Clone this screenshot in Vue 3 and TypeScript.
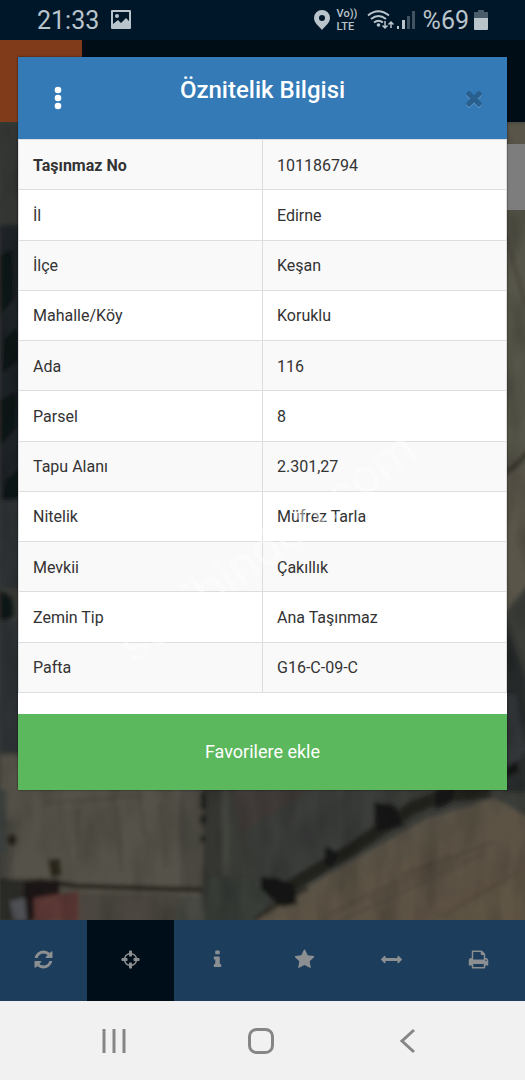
<script setup lang="ts">
interface Attribute {
  label: string
  value: string
}

interface Tool {
  name: string
  path: string
  active?: boolean
}

const attributes: Attribute[] = [
  { label: 'Taşınmaz No', value: '101186794' },
  { label: 'İl', value: 'Edirne' },
  { label: 'İlçe', value: 'Keşan' },
  { label: 'Mahalle/Köy', value: 'Koruklu' },
  { label: 'Ada', value: '116' },
  { label: 'Parsel', value: '8' },
  { label: 'Tapu Alanı', value: '2.301,27' },
  { label: 'Nitelik', value: 'Müfrez Tarla' },
  { label: 'Mevkii', value: 'Çakıllık' },
  { label: 'Zemin Tip', value: 'Ana Taşınmaz' },
  { label: 'Pafta', value: 'G16-C-09-C' },
]

const tools: Tool[] = [
  {
    name: 'Yenile',
    path: 'M1639 1056q0 5-1 7-64 268-268 434.5t-478 166.5q-146 0-282.5-55t-243.5-157l-129 129q-19 19-45 19t-45-19-19-45v-448q0-26 19-45t45-19h448q26 0 45 19t19 45-19 45l-137 137q71 66 161 102t187 36q134 0 250-65t186-179q11-17 53-117 8-23 30-23h192q13 0 22.5 9.5t9.5 22.5zm25-800v448q0 26-19 45t-45 19h-448q-26 0-45-19t-19-45 19-45l138-138q-148-137-349-137-134 0-250 65t-186 179q-11 17-53 117-8 23-30 23h-199q-13 0-22.5-9.5t-9.5-22.5v-7q65-268 270-434.5t480-166.5q146 0 284 55.5t245 156.5l130-129q19-19 45-19t45 19 19 45z',
  },
  {
    name: 'Konum',
    active: true,
    path: 'M1325 1024h-109q-26 0-45-19t-19-45v-128q0-26 19-45t45-19h109q-32-108-112.5-188.5t-188.5-112.5v109q0 26-19 45t-45 19h-128q-26 0-45-19t-19-45v-109q-108 32-188.5 112.5t-112.5 188.5h109q26 0 45 19t19 45v128q0 26-19 45t-45 19h-109q32 108 112.5 188.5t188.5 112.5v-109q0-26 19-45t45-19h128q26 0 45 19t19 45v109q108-32 188.5-112.5t112.5-188.5zm339-192v128q0 26-19 45t-45 19h-143q-37 161-154.5 278.5t-278.5 154.5v143q0 26-19 45t-45 19h-128q-26 0-45-19t-19-45v-143q-161-37-278.5-154.5t-154.5-278.5h-143q-26 0-45-19t-19-45v-128q0-26 19-45t45-19h143q37-161 154.5-278.5t278.5-154.5v-143q0-26 19-45t45-19h128q26 0 45 19t19 45v143q161 37 278.5 154.5t154.5 278.5h143q26 0 45 19t19 45z',
  },
  {
    name: 'Bilgi',
    path: 'M1216 1344v128q0 26-19 45t-45 19h-512q-26 0-45-19t-19-45v-128q0-26 19-45t45-19h64v-384h-64q-26 0-45-19t-19-45v-128q0-26 19-45t45-19h384q26 0 45 19t19 45v576h64q26 0 45 19t19 45zm-128-1152v192q0 26-19 45t-45 19h-256q-26 0-45-19t-19-45v-192q0-26 19-45t45-19h256q26 0 45 19t19 45z',
  },
  {
    name: 'Favoriler',
    path: 'M1728 647q0 22-26 48l-363 354 86 500q1 7 1 20 0 21-10.5 35.5t-30.5 14.5q-19 0-40-12l-449-236-449 236q-22 12-40 12-21 0-31.5-14.5t-10.5-35.5q0-6 2-20l86-500-364-354q-25-27-25-48 0-37 56-46l502-73 225-455q19-41 49-41t49 41l225 455 502 73q56 9 56 46z',
  },
  {
    name: 'Ölçüm',
    path: 'M1792 896q0 26-19 45l-256 256q-19 19-45 19t-45-19-19-45v-128h-1024v128q0 26-19 45t-45 19-45-19l-256-256q-19-19-19-45t19-45l256-256q19-19 45-19t45 19 19 45v128h1024v-128q0-26 19-45t45-19 45 19l256 256q19 19 19 45z',
  },
  {
    name: 'Yazdır',
    path: 'M448 1536h896v-256h-896v256zm0-640h896v-384h-160q-40 0-68-28t-28-68v-160h-640v640zm1152 64q0-26-19-45t-45-19-45 19-19 45 19 45 45 19 45-19 19-45zm128 0v416q0 13-9.5 22.5t-22.5 9.5h-224v160q0 40-28 68t-68 28h-960q-40 0-68-28t-28-68v-160h-224q-13 0-22.5-9.5t-9.5-22.5v-416q0-79 56.5-135.5t135.5-56.5h64v-544q0-40 28-68t68-28h672q40 0 88 20t76 48l152 152q28 28 48 76t20 88v256h64q79 0 135.5 56.5t56.5 135.5z',
  },
]
</script>

<template>
  <div class="screen">
    <header class="status">
      <span class="clock">21:33</span>
      <svg class="picture" width="20" height="20" viewBox="0 0 20 20" aria-hidden="true">
        <path fill-rule="evenodd" d="M1 0h18q1 0 1 1v17q0 1-1 1H1q-1 0-1-1V1q0-1 1-1zM2 2v12l5-4 3 3 5-5 3 3V2z" />
        <circle cx="6" cy="6" r="2" />
      </svg>
      <div class="signals">
        <svg width="16" height="20" viewBox="0 0 16 20" aria-hidden="true">
          <path fill-rule="evenodd" d="M8 0a8 8 0 0 1 8 8c0 5-5 8-8 12C5 16 0 13 0 8a8 8 0 0 1 8-8zm0 5a3 3 0 1 0 0 6 3 3 0 0 0 0-6z" />
        </svg>
        <span class="volte"><span>Vo))</span><span>LTE</span></span>
        <svg class="wifi" width="27" height="20" viewBox="0 0 27 20" aria-hidden="true">
          <g fill="none" stroke="currentColor" stroke-width="2">
            <path d="M1 5.500Q11-3 22 5.500" />
            <path d="M4 9q7.500-6 15 0" />
            <path d="M7 12.500q4.500-3.500 9 0" />
            <path d="M18 11v7M15.500 15.500 18 18l2.500-2.500M24 18v-6M21.500 14.500 24 12l2.500 2.500" stroke-width="1.500" />
          </g>
          <circle cx="11.500" cy="15" r="1.800" />
        </svg>
        <svg class="bars" width="18" height="20" viewBox="0 0 18 20" aria-hidden="true">
          <path d="M0 16h2v3H0zM5 10h3v9H5z" />
          <path opacity=".35" d="M10 6h3v13h-3zM15 1h3v18h-3z" />
        </svg>
        <span class="charge">%69</span>
        <svg width="14" height="20" viewBox="0 0 14 20" aria-hidden="true">
          <path opacity=".4" d="M4 0h6v2h4v6H0V2h4z" />
          <path d="M0 8h14v11q0 1-1 1H1q-1 0-1-1z" />
        </svg>
      </div>
    </header>

    <div class="topbar"><div class="brand"></div></div>

    <main class="map">
      <svg class="terrain" viewBox="0 122 525 798" preserveAspectRatio="xMidYMax slice" aria-hidden="true">
        <defs>
          <filter id="soft" x="-5%" y="-5%" width="110%" height="110%"><feGaussianBlur stdDeviation="2" /></filter>
          <filter id="grain" x="0" y="0" width="100%" height="100%">
            <feTurbulence type="fractalNoise" baseFrequency=".05 .02" numOctaves="2" seed="4" />
            <feColorMatrix values="0 0 0 0 0  0 0 0 0 0  0 0 0 0 0  1.600 0 0 0 -.600" />
          </filter>
          <linearGradient id="plough" x1="0" y1="0" x2="1" y2="1">
            <stop offset="0" stop-color="#544f46" />
            <stop offset="1" stop-color="#615545" />
          </linearGradient>
        </defs>
        <rect y="122" width="525" height="798" fill="#3b3d39" />
        <g filter="url(#soft)">
          <path fill="#303632" d="M0 122h30v110H0z" />
          <path fill="#1f2425" d="M0 225h30v280H0z" />
          <path fill="#111617" d="M0 255l12-6 2 50-14 16zM4 340l14-14v34L2 374zM0 400l16-8v36L0 446zM0 590l12 8 2 18-14 8zM6 480l14-12v28L0 510z" />
          <path fill="#2d3234" d="M0 500h30v88H0zM0 620h30v132H0z" />
          <path fill="#5a5549" d="M490 122h40v460l-24 30h-16z" />
          <path fill="#56544a" d="M490 210h40v260h-40z" />
          <path fill="none" stroke="#3e3c32" stroke-width="2" d="M505 235l21 70" />
          <path fill="none" stroke="#34342b" stroke-width="5" d="M502 474q12-5 26-22" />
          <path fill="#282b2b" d="M505 620l22 62v110h-22z" />
          <path fill="#34393b" d="M505 695h11l10 55-20 30z" />
          <path fill="#171815" d="M505 768l12-8 2 12-14 6z" />
          <path fill="#55534a" d="M0 755h200l4 126-10 44H0z" />
          <path fill="#4b4a42" d="M180 770h25v120h-25zM0 820h14v60H0z" />
          <path fill="#3c4240" d="M0 790h6v64H0z" />
          <path fill="#343633" d="M203 780h25v145h-25z" />
          <path fill="#454640" d="M222 785h8v92h-8z" />
          <path fill="#403b37" d="M230 780h110l-8 54-90 10z" />
          <path fill="#3b3e3b" d="M320 785h75l-60 85-62 18-32-55z" />
          <path fill="#373d39" d="M210 878l60 2-10 45h-55z" />
          <path fill="url(#plough)" d="M250 925l60-40 115-66 70-21 35 20v110z" />
          <path fill="none" stroke="#23211f" stroke-width="13" stroke-linejoin="round" d="M284 890l24-15 44-26 32-22 28-19 30-12 48-5" />
          <path fill="none" stroke="#292723" stroke-width="4" d="M254 920l30-20 24-12" />
          <path fill="#171914" d="M261 877l16 1 18 8 2 18-16 3-20-18zM325 846l14 7-7 15-8-4zM374 802l21 4 8 20-27 5zM435 790l21-4-4 16-16 7z" />
          <path fill="none" stroke="#1c1e19" stroke-width="5" stroke-dasharray="17 6 9 12" d="M203 792v50" />
          <path fill="none" stroke="#25231f" stroke-width="5" d="M0 883l42-2 35 5 125 4" />
          <path fill="#1d1615" d="M22 883l37-4 1 15-24 8-3 20h-9z" />
          <path fill="#2b281a" d="M48 860l12-2 2 17-11 3z" />
          <ellipse cx="12" cy="840" rx="5" ry="6" fill="#25221d" />
          <path fill="#2b2927" d="M0 878l24 2v42H0z" />
          <path fill="#53555a" d="M10 901l15-3 2 22H14z" />
          <path fill="#5b3936" d="M34 898l45-7v31H34z" />
          <path fill="#4b4740" d="M80 893h100l-3 30H82z" />
          <path fill="#474942" d="M180 896h22l4 26h-32z" />
          <g fill="none" stroke="#434139" stroke-width="2" opacity=".7">
            <path d="M78 810v50M118 806l3 66M140 796l4 40M160 802l5 66M45 803l100-8M245 800l8 80M285 825l20-10" />
          </g>
          <g fill="none" stroke="#4b4033" stroke-width="2" opacity=".6">
            <path d="M330 914l120-58M345 919l140-66M400 875l95-33M440 917l80-46M370 900l90-42" />
          </g>
        </g>
        <rect y="122" width="525" height="798" filter="url(#grain)" opacity=".2" />
      </svg>
      <div class="map-control"></div>
    </main>

    <nav class="toolbar" aria-label="Harita araçları">
      <button v-for="tool in tools" :key="tool.name" type="button" :class="{ active: tool.active }" :aria-label="tool.name">
        <svg width="21" height="21" viewBox="0 0 1792 1792" aria-hidden="true"><path :d="tool.path" /></svg>
      </button>
    </nav>

    <footer class="system">
      <button type="button" aria-label="Son uygulamalar">
        <svg width="26" height="26" viewBox="0 0 26 26" aria-hidden="true"><path d="M3 1v24M13 1v24M23 1v24" /></svg>
      </button>
      <button type="button" aria-label="Ana ekran">
        <svg width="26" height="26" viewBox="0 0 26 26" aria-hidden="true"><rect x="1.500" y="1.500" width="23" height="23" rx="7" /></svg>
      </button>
      <button type="button" aria-label="Geri">
        <svg width="26" height="26" viewBox="0 0 26 26" aria-hidden="true"><path d="M19 2 7 13l12 11" /></svg>
      </button>
    </footer>

    <section class="dialog" role="dialog" aria-labelledby="dialog-title">
      <div class="dialog-head">
        <button type="button" class="head-button" aria-label="Menü">
          <svg width="8" height="24" viewBox="0 0 8 24" aria-hidden="true">
            <circle cx="4" cy="4" r="3.300" /><circle cx="4" cy="12" r="3.300" /><circle cx="4" cy="20" r="3.300" />
          </svg>
        </button>
        <h1 id="dialog-title">Öznitelik Bilgisi</h1>
        <button type="button" class="head-button close" aria-label="Kapat">
          <svg width="24" height="24" viewBox="0 0 1792 1792" aria-hidden="true">
            <path d="M1490 1322q0 40-28 68l-136 136q-28 28-68 28t-68-28l-294-294-294 294q-28 28-68 28t-68-28l-136-136q-28-28-28-68t28-68l294-294-294-294q-28-28-28-68t28-68l136-136q28-28 68-28t68 28l294 294 294-294q28-28 68-28t68 28l136 136q28 28 28 68t-28 68l-294 294 294 294q28 28 28 68z" />
          </svg>
        </button>
      </div>
      <div class="dialog-body">
        <table>
          <tbody>
            <tr v-for="item in attributes" :key="item.label">
              <th scope="row">{{ item.label }}</th>
              <td>{{ item.value }}</td>
            </tr>
          </tbody>
        </table>
        <span class="watermark" aria-hidden="true">sahibinden.com</span>
      </div>
      <button type="button" class="favorite">Favorilere ekle</button>
    </section>
  </div>
</template>

<style>
body {
  margin: 0;
  background: #f1f1f1;
}
</style>

<style scoped>
.screen {
  position: relative;
  display: flex;
  flex-direction: column;
  min-height: 100vh;
  overflow: hidden;
  font-family: Roboto, "Liberation Sans", sans-serif;
  color: #333;
}

button {
  margin: 0;
  padding: 0;
  border: 0;
  background: none;
  font: inherit;
  cursor: pointer;
}

svg {
  display: block;
  flex: none;
}

.status {
  display: flex;
  align-items: center;
  box-sizing: border-box;
  height: 40px;
  padding: 0 37px;
  background: #001729;
  color: #bac4cb;
  fill: currentColor;
}

.clock,
.charge {
  padding-top: 2px;
  font-size: 25px;
  line-height: 38px;
}

.picture {
  margin-left: 12px;
}

.signals {
  display: flex;
  align-items: center;
  margin-left: auto;
}

.volte {
  display: flex;
  flex-direction: column;
  width: 22px;
  margin: 0 8px 0 7px;
  font-size: 11px;
  font-weight: 500;
  line-height: 13px;
}

.bars {
  margin: 0 8px 0 3px;
}

.charge {
  margin-right: 5px;
}

.topbar {
  display: flex;
  height: 82px;
  background: #000d17;
}

.brand {
  width: 82px;
  background: #7f3b1a;
}

.map {
  position: relative;
  flex: 1;
  min-height: 798px;
  background: #3b3d39;
}

.terrain {
  position: absolute;
  width: 100%;
  height: 100%;
}

.map-control {
  position: absolute;
  top: 22px;
  right: 0;
  width: 60px;
  height: 66px;
  background: #7d7d7d;
}

.toolbar {
  position: relative;
  display: flex;
  height: 81px;
  padding-right: 3px;
  background: #1c3d5b;
}

.toolbar button {
  display: flex;
  flex: 1;
  align-items: center;
  justify-content: center;
  padding-bottom: 3px;
  fill: #8c8f92;
}

.toolbar .active {
  background: #000e1a;
}

.system {
  display: flex;
  justify-content: center;
  gap: 121px;
  height: 79px;
  padding-right: 4px;
  background: #f1f1f1;
}

.system button {
  display: flex;
  align-items: center;
  fill: none;
  stroke: #868686;
  stroke-width: 3px;
}

.dialog {
  position: absolute;
  top: 57px;
  right: 18px;
  left: 18px;
  background: #fff;
  box-shadow: 0 0 2px rgba(0, 0, 0, 0.6);
}

.dialog-head {
  display: grid;
  grid-template-columns: 80px 1fr 80px;
  align-items: center;
  height: 82px;
  background: #337ab7;
}

.dialog-head h1 {
  margin: 0;
  padding-bottom: 16px;
  color: #fff;
  font-size: 24px;
  font-weight: 500;
  line-height: 28px;
  text-align: center;
}

.head-button {
  display: flex;
  justify-content: center;
  fill: #fff;
}

.close {
  justify-self: end;
  width: 66px;
  fill: #285f8f;
  filter: drop-shadow(0 1px 0 rgba(255, 255, 255, 0.25));
}

.dialog-body {
  position: relative;
  padding-bottom: 21px;
}

table {
  width: 100%;
  height: 554px;
  border-collapse: collapse;
  table-layout: fixed;
}

th,
td {
  padding: 2px 14px 0;
  border: 1px solid #ddd;
  font-size: 16px;
  font-weight: 400;
  line-height: 20px;
  text-align: left;
}

tr:nth-child(odd) {
  background: #f9f9f9;
}

tr:first-child th {
  font-weight: 700;
}

.watermark {
  position: absolute;
  top: 71%;
  left: 51%;
  color: rgba(255, 255, 255, 0.4);
  font-size: 50px;
  line-height: 56px;
  transform: translate(-50%, -50%) rotate(-36deg);
  pointer-events: none;
}

.favorite {
  display: block;
  width: 100%;
  height: 76px;
  padding-bottom: 2px;
  background: #5cb85c;
  color: #fff;
  font-size: 18px;
}
</style>
